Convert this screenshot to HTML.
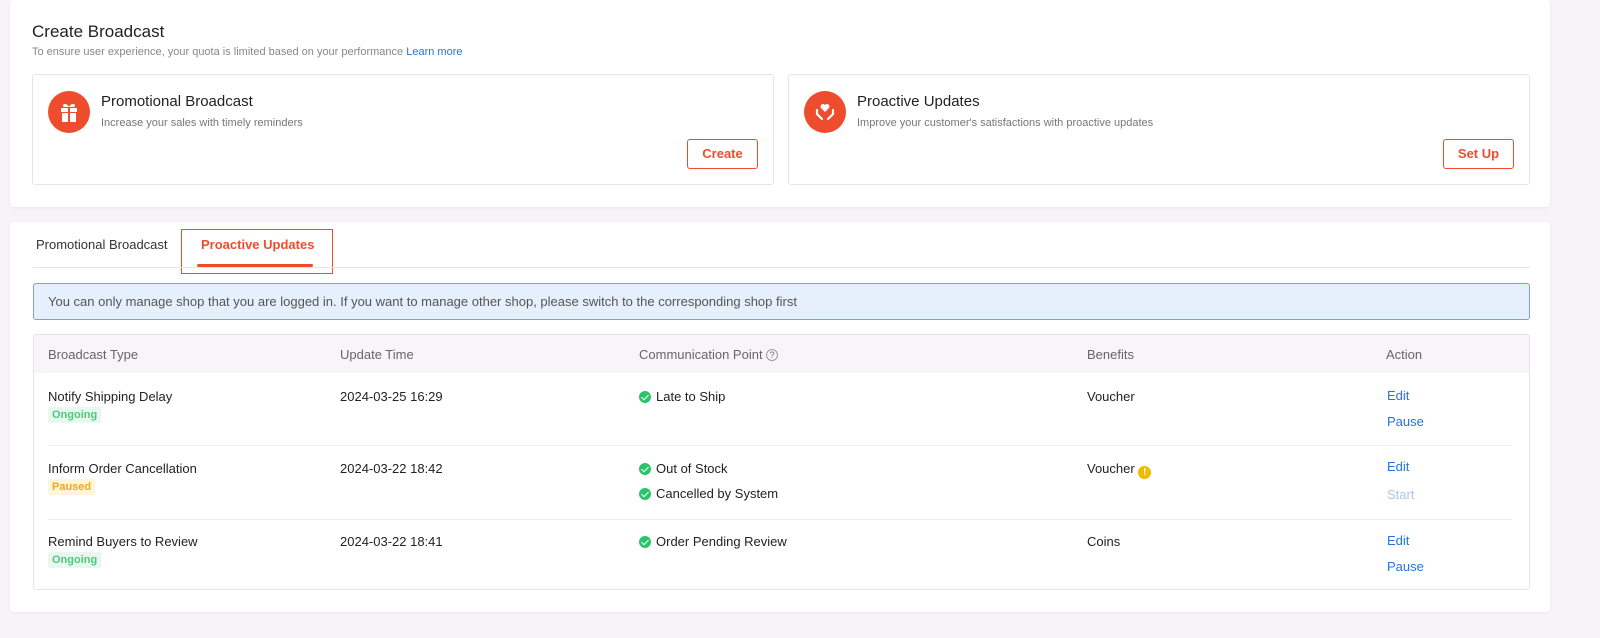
<!DOCTYPE html>
<html><head><style>
*{box-sizing:border-box;margin:0;padding:0}
body{width:1600px;height:638px;background:#f6f4f7;font-family:"Liberation Sans",Arial,sans-serif;position:relative;overflow:hidden;color:#222}
.card{position:absolute;background:#fff;border-radius:4px;box-shadow:0 1px 3px rgba(0,0,0,.06)}
.abs{position:absolute}
.box{position:absolute;border:1px solid #e5e5e5;border-radius:3px;background:#fff}
.ic{position:absolute;width:42px;height:42px;border-radius:50%;background:#ee4d2d}
.btn{position:absolute;border:1px solid #ee4d2d;color:#ee4d2d;border-radius:3px;font-size:13px;font-weight:bold;text-align:center;line-height:28px;height:30px}
.t13{font-size:13px}
.tag{position:absolute;font-size:11px;font-weight:bold;padding:2px 4px;border-radius:2px}
.g{color:#4fc77c;background:#e9f8ef}
.y{color:#f2a81b;background:#fff4dc}
.chk{display:inline-block;width:12px;height:12px;border-radius:50%;background:#2bc46a;vertical-align:-2px;margin-right:5px;position:relative}
.chk:after{content:"";position:absolute;left:4px;top:2px;width:3px;height:6px;border:solid #fff;border-width:0 1.5px 1.5px 0;transform:rotate(45deg)}
.link{color:#2673dd;font-size:13px}
</style></head><body>
<div class="card" style="left:10px;top:0;width:1540px;height:207px">
<div class="abs" style="left:22px;top:22px;font-size:17px;color:#222">Create Broadcast</div>
<div class="abs" style="left:22px;top:46px;font-size:11px;color:#888">To ensure user experience, your quota is limited based on your performance <span style="color:#2673dd">Learn more</span></div>
<div class="box" style="left:22px;top:74px;width:742px;height:111px">
<div class="ic" style="left:15px;top:16px"><svg width="42" height="42" viewBox="0 0 42 42"><rect x="13" y="17" width="16" height="4" fill="#fff"/><rect x="14" y="22" width="14" height="9" fill="#fff"/><rect x="20" y="17" width="2" height="14" fill="#ee4d2d"/><path d="M21 16c-2-4-6-4-6-1 0 1 2 1 6 1zM21 16c2-4 6-4 6-1 0 1-2 1-6 1z" fill="#fff"/></svg></div>
<div class="abs" style="left:68px;top:18px;font-size:15px">Promotional Broadcast</div>
<div class="abs" style="left:68px;top:42px;font-size:11px;color:#777">Increase your sales with timely reminders</div>
<div class="btn" style="left:654px;top:64px;width:71px">Create</div>
</div>
<div class="box" style="left:778px;top:74px;width:742px;height:111px">
<div class="ic" style="left:15px;top:16px"><svg width="42" height="42" viewBox="0 0 42 42"><path d="M21 21l-4-4a2.5 2.5 0 0 1 4-3 2.5 2.5 0 0 1 4 3z" fill="#fff"/><path d="M13 19v4l5 5M29 19v4l-5 5" stroke="#fff" stroke-width="2.2" fill="none" stroke-linecap="round"/></svg></div>
<div class="abs" style="left:68px;top:18px;font-size:15px">Proactive Updates</div>
<div class="abs" style="left:68px;top:42px;font-size:11px;color:#777">Improve your customer's satisfactions with proactive updates</div>
<div class="btn" style="left:654px;top:64px;width:71px">Set Up</div>
</div>
</div>
<div class="card" style="left:10px;top:222px;width:1540px;height:390px">
<div class="abs" style="left:26px;top:15px;font-size:13px;color:#333">Promotional Broadcast</div>
<div class="abs" style="left:171px;top:7px;width:152px;height:45px;border:1px solid #ee4d2d"></div>
<div class="abs" style="left:191px;top:15px;font-size:13px;color:#ee4d2d;font-weight:bold">Proactive Updates</div>
<div class="abs" style="left:187px;top:42px;width:116px;height:3px;background:#ee4d2d;border-radius:2px"></div>
<div class="abs" style="left:23px;top:45px;width:1497px;height:1px;background:#e5e5e5"></div>
<div class="abs" style="left:23px;top:61px;width:1497px;height:37px;background:#e6effc;border:1px solid #7da2d6;border-radius:3px;font-size:13px;color:#555;padding:10px 14px 0">You can only manage shop that you are logged in. If you want to manage other shop, please switch to the corresponding shop first</div>
<div class="box" style="left:23px;top:112px;width:1497px;height:256px;overflow:hidden">
<div class="abs" style="left:0;top:0;width:1497px;height:38px;background:#f7f5f8;font-size:13px;color:#666">
<span class="abs" style="left:14px;top:12px">Broadcast Type</span><span class="abs" style="left:306px;top:12px">Update Time</span><span class="abs" style="left:605px;top:12px">Communication Point <span style="display:inline-block;width:12px;height:12px;border:1px solid #999;border-radius:50%;font-size:9px;text-align:center;line-height:10px;vertical-align:1px">?</span></span><span class="abs" style="left:1053px;top:12px">Benefits</span><span class="abs" style="left:1352px;top:12px">Action</span></div>
<div class="abs" style="left:14px;top:110px;width:1464px;height:1px;background:#eee"></div>
<div class="abs" style="left:14px;top:184px;width:1464px;height:1px;background:#eee"></div>
<div class="abs t13" style="left:14px;top:54px">Notify Shipping Delay</div><span class="tag g" style="left:14px;top:72px">Ongoing</span>
<div class="abs t13" style="left:306px;top:54px">2024-03-25 16:29</div>
<div class="abs t13" style="left:605px;top:54px"><span class="chk"></span>Late to Ship</div>
<div class="abs t13" style="left:1053px;top:54px">Voucher</div>
<div class="abs link" style="left:1353px;top:53px">Edit</div><div class="abs link" style="left:1353px;top:79px">Pause</div>
<div class="abs t13" style="left:14px;top:126px">Inform Order Cancellation</div><span class="tag y" style="left:14px;top:144px">Paused</span>
<div class="abs t13" style="left:306px;top:126px">2024-03-22 18:42</div>
<div class="abs t13" style="left:605px;top:126px"><span class="chk"></span>Out of Stock</div>
<div class="abs t13" style="left:605px;top:151px"><span class="chk"></span>Cancelled by System</div>
<div class="abs t13" style="left:1053px;top:126px">Voucher <span style="display:inline-block;width:13px;height:13px;border-radius:50%;background:#f5b800;color:#fff;font-size:10px;font-weight:bold;text-align:center;line-height:13px;vertical-align:-2px">!</span></div>
<div class="abs link" style="left:1353px;top:124px">Edit</div><div class="abs link" style="left:1353px;top:152px;color:#a9c6ee">Start</div>
<div class="abs t13" style="left:14px;top:199px">Remind Buyers to Review</div><span class="tag g" style="left:14px;top:217px">Ongoing</span>
<div class="abs t13" style="left:306px;top:199px">2024-03-22 18:41</div>
<div class="abs t13" style="left:605px;top:199px"><span class="chk"></span>Order Pending Review</div>
<div class="abs t13" style="left:1053px;top:199px">Coins</div>
<div class="abs link" style="left:1353px;top:198px">Edit</div><div class="abs link" style="left:1353px;top:224px">Pause</div>
</div>
</div>
</body></html>
